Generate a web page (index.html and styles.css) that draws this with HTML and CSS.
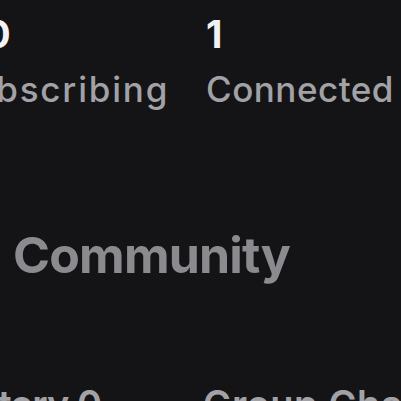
FILE: index.html
```html
<!DOCTYPE html>
<html>
<head>
<meta charset="utf-8">
<link rel="stylesheet" href="styles.css">
</head>
<body>
<main class="page">
  <section class="stats">
    <div class="stat stat-first">
      <span class="stat-num">20</span>
      <span class="stat-label stat-label-wide">Subscribing</span>
    </div>
    <div class="stat">
      <span class="stat-num">1</span>
      <span class="stat-label">Connected</span>
    </div>
  </section>
  <h2 class="section-title">Community</h2>
  <section class="links">
    <span class="link link-first">History 0</span>
    <span class="link">Group Chat</span>
  </section>
</main>
</body>
</html>
```
FILE: styles.css
```css
html, body {
  margin: 0;
  padding: 0;
  background: #141416;
  overflow: hidden;
}
.page {
  font-family: Inter, "Noto Sans", sans-serif;
  padding-top: 15px;
  width: 401px;
  height: 401px;
  overflow: hidden;
}
.stats {
  display: flex;
  margin-left: -51px;
}
.stat {
  display: flex;
  flex-direction: column;
  align-items: flex-start;
  gap: 19px;
}
.stat-first {
  width: 257px;
  flex: none;
}
.stat-first .stat-num {
  padding-left: 12px;
}
.stat-num {
  font-size: 38px;
  line-height: 1;
  font-weight: 700;
  color: #f2f2f4;
}
.stat-label {
  font-size: 35px;
  line-height: 1;
  font-weight: 500;
  color: #a2a2a6;
  white-space: nowrap;
  letter-spacing: 0.5px;
}
.stat-label-wide {
  letter-spacing: 1.8px;
}
.section-title {
  margin: 0;
  margin-top: 123px;
  padding-left: 13px;
  font-size: 50px;
  line-height: 1;
  font-weight: 700;
  color: #8b8b8f;
  letter-spacing: -0.8px;
}
.links {
  display: flex;
  margin-left: -58px;
  margin-top: 105px;
}
.link {
  font-size: 38px;
  line-height: 1;
  font-weight: 600;
  color: #a2a2a6;
  white-space: nowrap;
  letter-spacing: 0.5px;
}
.link-first {
  width: 261px;
  flex: none;
  letter-spacing: -1px;
}
```
